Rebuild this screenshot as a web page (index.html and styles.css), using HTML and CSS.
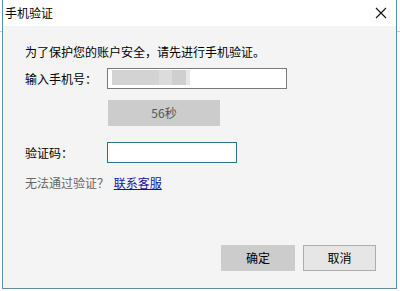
FILE: index.html
```html
<!DOCTYPE html>
<html lang="zh-CN">
<head>
<meta charset="utf-8">
<title>手机验证</title>
<link rel="stylesheet" href="styles.css">
</head>
<body>
<div class="page">
  <div class="dialog">
    <div class="titlebar">
      <span class="title">手机验证</span>
      <svg class="close" width="12" height="12" viewBox="0 0 12 12"><path d="M1 1 L11 11 M11 1 L1 11" stroke="#111" stroke-width="1.1" fill="none"/></svg>
    </div>
    <div class="body">
      <p class="intro">为了保护您的账户安全，请先进行手机验证。</p>
      <div class="row phone-row">
        <span class="label">输入手机号：</span>
        <div class="input phone"></div>
      </div>
      <div class="row">
        <span class="label"></span>
        <button class="btn countdown">56秒</button>
      </div>
      <div class="row code-row">
        <span class="label">验证码：</span>
        <div class="input code"></div>
      </div>
      <p class="help"><span class="muted">无法通过验证？</span> <a class="link" href="#">联系客服</a></p>
      <div class="footer">
        <button class="btn ok">确定</button>
        <button class="btn cancel">取消</button>
      </div>
    </div>
  </div>
</div>
</body>
</html>
```
FILE: styles.css
```css
* { box-sizing: border-box; }
html, body { margin: 0; padding: 0; }
body {
  background: #ffffff;
  font-family: "Noto Sans CJK SC", "Microsoft YaHei", sans-serif;
  font-size: 12px;
  color: #000;
  width: 400px;
  height: 291px;
  overflow: hidden;
}
.page {
  padding-left: 2px;
  height: 291px;
  background:
    linear-gradient(#c8c8c8, #c8c8c8) 0 31px / 2px 1px no-repeat,
    linear-gradient(#c8c8c8, #c8c8c8) 397px 31px / 3px 1px no-repeat,
    #fff;
}
.dialog {
  width: 395px;
  height: 289px;
  border: 1px solid #5f8ea6;
  border-top: none;
  display: flex;
  flex-direction: column;
  background: #f4f4f4;
}
.titlebar {
  height: 26px;
  background: #fff;
  display: flex;
  align-items: center;
  justify-content: space-between;
  padding: 0 8px 0 2px;
}
.title { font-size: 12px; line-height: 16px; margin-top: -1px; }
.close { display: block; margin-right: 1px; }
.body {
  flex: 1;
  display: flex;
  flex-direction: column;
  padding: 18px 20px 17px 22px;
}
.intro { margin: 0; line-height: 16px; }
.row {
  display: grid;
  grid-template-columns: 82px auto;
  align-items: center;
}
.phone-row { margin-top: 8px; }
.label { line-height: 16px; }
.input {
  height: 21px;
  background: #fff;
  border: 1px solid #7a7a7a;
}
.phone {
  width: 180px;
  background:
    linear-gradient(90deg, #d3d3d3 0, #d3d3d3 47px, #dcdcdc 47px, #dcdcdc 60px, #cfcfcf 60px, #cfcfcf 74px, #e8e8e8 74px, #e8e8e8 78px, transparent 78px) 4px 1px / 80px 15px no-repeat,
    #fff;
}
.code {
  width: 130px;
  border-color: #2f7286;
}
.code-row { margin-top: 16px; }
.btn {
  font-family: inherit;
  font-size: 12px;
  line-height: 16px;
  padding: 0;
  margin: 0;
  border: 1px solid #cccccc;
  background: #cccccc;
  color: #000;
  height: 26px;
}
.countdown {
  margin-top: 11px;
  width: 112px;
  margin-left: 1px;
  color: #555;
}
.help { margin: 12px 0 0; line-height: 16px; }
.muted { color: #666; }
.link { color: #16169c; text-decoration: underline; margin-left: 2px; }
.footer {
  margin-top: auto;
  display: flex;
  justify-content: flex-end;
  gap: 8px;
}
.ok { width: 74px; }
.cancel {
  width: 73px;
  background: #e6e6e6;
  border-color: #adadad;
}
```
